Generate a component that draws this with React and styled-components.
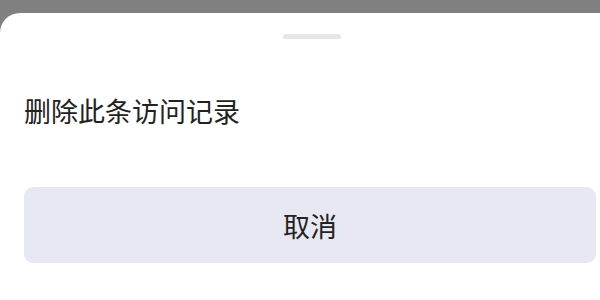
import React from "react";
import styled, { createGlobalStyle } from "styled-components";

const Global = createGlobalStyle`
  html, body {
    margin: 0;
    padding: 0;
    background: #808080;
    overflow: hidden;
    height: 300px;
  }
  body {
    font-family: "Noto Sans CJK SC", "Noto Sans", sans-serif;
  }
`;

const Sheet = styled.div`
  margin-top: 13px;
  width: 624px;
  height: 287px;
  box-sizing: border-box;
  background: #ffffff;
  border-radius: 20px 20px 0 0;
  padding: 21px 28px 0 24px;
  display: flex;
  flex-direction: column;
`;

const Handle = styled.div`
  align-self: center;
  margin-left: 4px;
  width: 58px;
  height: 5px;
  border-radius: 3px;
  background: #e6e6e8;
`;

const Title = styled.div`
  margin-top: 54px;
  font-size: 27px;
  line-height: 36px;
  color: #222222;
`;

const CancelButton = styled.button`
  margin-top: 58px;
  height: 76px;
  border: none;
  border-radius: 9px;
  background: #e8e8f3;
  font-family: inherit;
  font-size: 27px;
  color: #222222;
  display: flex;
  align-items: center;
  justify-content: center;
  cursor: pointer;
`;

export default function App() {
  return (
    <>
      <Global />
      <Sheet>
        <Handle />
        <Title>删除此条访问记录</Title>
        <CancelButton>取消</CancelButton>
      </Sheet>
    </>
  );
}
